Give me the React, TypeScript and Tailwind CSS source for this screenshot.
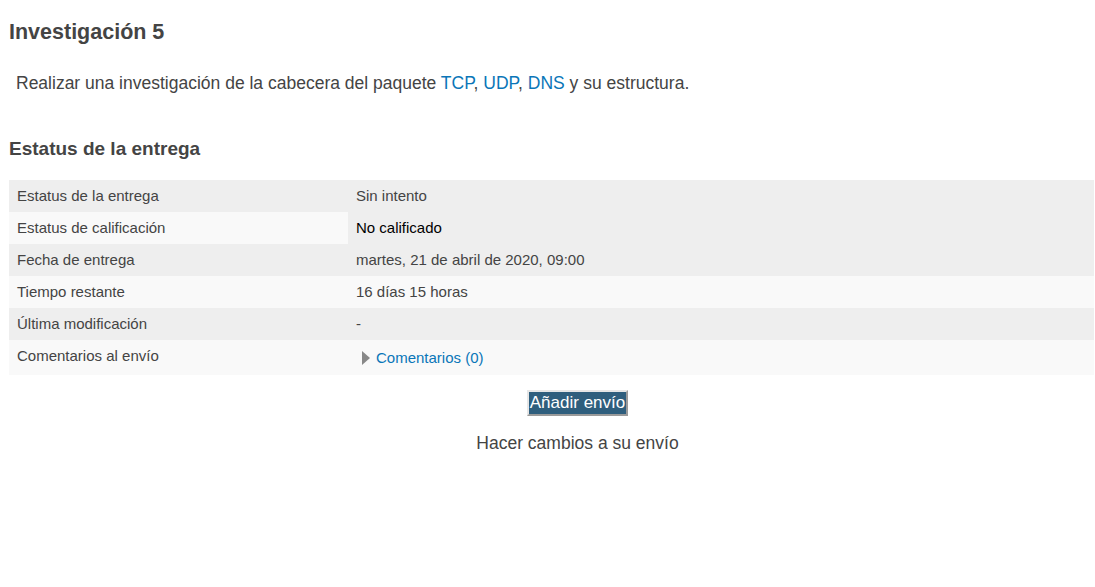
import React from "react";

const rows: { label: string; value: React.ReactNode; alt: boolean; valueBg?: string }[] = [
  { label: "Estatus de la entrega", value: "Sin intento", alt: false },
  { label: "Estatus de calificación", value: <span className="text-black">No calificado</span>, alt: true, valueBg: "bg-[#eeeeee]" },
  { label: "Fecha de entrega", value: "martes, 21 de abril de 2020, 09:00", alt: false },
  { label: "Tiempo restante", value: "16 días 15 horas", alt: true },
  { label: "Última modificación", value: "-", alt: false },
];

export default function App() {
  return (
    <div className="min-h-[587px] bg-white text-[#444] font-['Liberation_Sans',Arial,sans-serif]">
      <div className="pl-[9px] pr-[1px]">
        <h2 className="pt-[19px] text-[21.5px] leading-[26px] font-bold text-[#444]">Investigación 5</h2>
        <p className="mt-[26px] pl-[7px] text-[17.5px] leading-[24px]">
          Realizar una investigación de la cabecera del paquete{" "}
          <span className="text-[#0a76b8]">TCP</span>,{" "}
          <span className="text-[#0a76b8]">UDP</span>,{" "}
          <span className="text-[#0a76b8]">DNS</span> y su estructura.
        </p>
        <h3 className="mt-[42px] text-[19px] leading-[24px] font-bold text-[#444]">Estatus de la entrega</h3>
        <div className="mt-[19px] text-[15px] leading-[20px]">
          {rows.map((r) => (
            <div key={r.label} className={`flex h-[32px] ${r.alt ? "bg-[#f9f9f9]" : "bg-[#eeeeee]"}`}>
              <div className="w-[339px] pl-[8px] pt-[6px]">{r.label}</div>
              <div className={`flex-1 pl-[8px] pt-[6px] ${r.valueBg ?? ""}`}>{r.value}</div>
            </div>
          ))}
          <div className="flex h-[35px] bg-[#f9f9f9]">
            <div className="w-[339px] pl-[8px] pt-[6px]">Comentarios al envío</div>
            <div className="flex-1 pl-[14px] pt-[8px] flex items-start gap-[6px]">
              <svg width="8" height="16" viewBox="0 0 8 16" className="mt-[2px]">
                <polygon points="0,1 8,8 0,15" fill="#888" />
              </svg>
              <span className="text-[#0a76b8]">Comentarios (0)</span>
            </div>
          </div>
        </div>
      </div>
      <div className="pl-[60px] flex flex-col items-center">
        <button className="mt-[15px] h-[26px] px-[1px] border-2 border-t-[#e6e6e6] border-l-[#e6e6e6] border-b-[#9a9a9a] border-r-[#9a9a9a] bg-[#2f5e7d] text-white text-[17px] leading-[20px] flex items-center">
          Añadir envío
        </button>
        <p className="mt-[16px] text-[17.5px] leading-[22px] text-[#444]">Hacer cambios a su envío</p>
      </div>
    </div>
  );
}
